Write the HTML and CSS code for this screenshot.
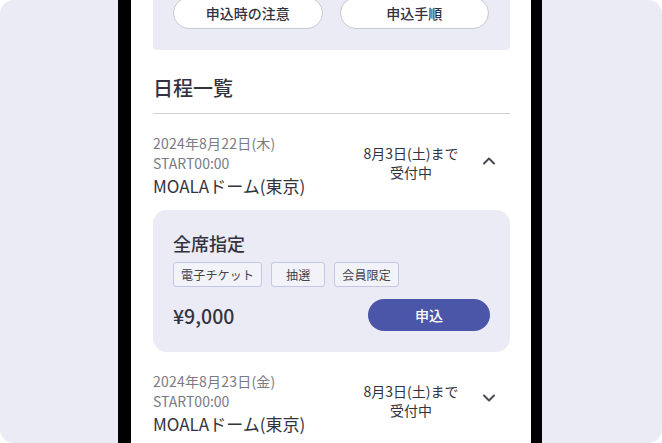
FILE: index.html
```html
<!DOCTYPE html>
<html lang="ja">
<head>
    <meta charset="UTF-8">
    <title>日程一覧</title>
    <link rel="stylesheet" href="styles.css">
</head>
<body>
    <div class="screen">
        <div class="phone">
            <div class="content">
                <div class="notice">
                    <button class="pill-button">申込時の注意</button>
                    <button class="pill-button">申込手順</button>
                </div>

                <h2 class="section-title">日程一覧</h2>

                <div class="event-row">
                    <div class="event-info">
                        <div class="event-date">2024年8月22日(木)</div>
                        <div class="event-start">START00:00</div>
                        <div class="event-venue">MOALAドーム(東京)</div>
                    </div>
                    <div class="event-status">8月3日(土)まで<br>受付中</div>
                    <div class="chevron">
                        <svg width="14" height="9" viewBox="0 0 14 9"><polyline points="2,7.5 7,2.5 12,7.5" fill="none" stroke="#4a4a55" stroke-width="2" stroke-linecap="round" stroke-linejoin="round"/></svg>
                    </div>
                </div>

                <div class="ticket-card">
                    <div class="ticket-title">全席指定</div>
                    <div class="tags">
                        <span class="tag">電子チケット</span>
                        <span class="tag">抽選</span>
                        <span class="tag">会員限定</span>
                    </div>
                    <div class="ticket-bottom">
                        <div class="price">¥9,000</div>
                        <button class="apply-button">申込</button>
                    </div>
                </div>

                <div class="event-row">
                    <div class="event-info">
                        <div class="event-date">2024年8月23日(金)</div>
                        <div class="event-start">START00:00</div>
                        <div class="event-venue">MOALAドーム(東京)</div>
                    </div>
                    <div class="event-status">8月3日(土)まで<br>受付中</div>
                    <div class="chevron">
                        <svg width="14" height="9" viewBox="0 0 14 9"><polyline points="2,1.5 7,6.5 12,1.5" fill="none" stroke="#4a4a55" stroke-width="2" stroke-linecap="round" stroke-linejoin="round"/></svg>
                    </div>
                </div>
            </div>
        </div>
    </div>
</body>
</html>
```

FILE: styles.css
```css
body {
    margin: 0;
    background: #ffffff;
    font-family: "Noto Sans CJK JP", "Noto Sans", sans-serif;
    color: #333340;
}
.screen {
    width: 662px;
    height: 443px;
    background: #ebebf5;
    border-radius: 14px;
    padding-left: 118px;
    box-sizing: border-box;
    overflow: hidden;
}
.phone {
    width: 400px;
    height: 443px;
    background: #ffffff;
    border-left: 13px solid #000;
    border-right: 11px solid #000;
    overflow: hidden;
}
.content {
    padding: 0 21px 0 22px;
}
.notice {
    display: flex;
    gap: 17px;
    background: #ebebf5;
    padding: 0 21px 21px 20px;
    border-radius: 0 0 4px 4px;
}
.pill-button {
    flex: 1;
    height: 32px;
    margin-top: -3px;
    background: #fff;
    border: 1px solid #c8c8d0;
    border-radius: 16px;
    font-family: inherit;
    font-size: 14px;
    font-weight: 500;
    color: #333340;
    padding: 0;
}
.section-title {
    margin: 24px 0 0;
    font-size: 20px;
    font-weight: 500;
    line-height: 28px;
    padding-bottom: 11px;
    border-bottom: 1px solid #cfcfd6;
}
.event-row {
    display: flex;
    align-items: center;
    padding: 19px 0 12px;
}
.event-info {
    flex: 1;
}
.event-date {
    font-size: 14px;
    line-height: 20px;
    color: #7a7a84;
    letter-spacing: 0.2px;
}
.event-start {
    font-size: 14px;
    line-height: 21px;
    color: #7a7a84;
}
.event-venue {
    font-size: 17px;
    line-height: 24px;
    color: #333340;
}
.event-status {
    width: 110px;
    text-align: center;
    font-size: 14px;
    line-height: 19px;
    margin-bottom: 6px;
    color: #333340;
}
.chevron {
    width: 22px;
    margin: 0 10px 10px 12px;
    display: flex;
    justify-content: center;
}
.ticket-card {
    background: #ebebf5;
    border-radius: 14px;
    padding: 20px 20px 21px;
}
.ticket-title {
    font-size: 18px;
    font-weight: 500;
    line-height: 26px;
}
.tags {
    display: flex;
    gap: 9px;
    margin-top: 6px;
}
.tag {
    min-width: 54px;
    height: 25px;
    box-sizing: border-box;
    padding: 0 7px;
    border: 1px solid #c3c6e4;
    border-radius: 3px;
    background: #f2f2f9;
    font-size: 12px;
    line-height: 23px;
    text-align: center;
    color: #44444f;
    letter-spacing: 0.2px;
}
.ticket-bottom {
    display: flex;
    justify-content: space-between;
    align-items: center;
    margin-top: 12px;
}
.price {
    font-size: 19.5px;
    font-weight: 500;
}
.apply-button {
    width: 122px;
    height: 32px;
    border: none;
    border-radius: 16px;
    background: #4c56a8;
    color: #fff;
    font-family: inherit;
    font-size: 14px;
    font-weight: 500;
    padding: 0;
}
```
